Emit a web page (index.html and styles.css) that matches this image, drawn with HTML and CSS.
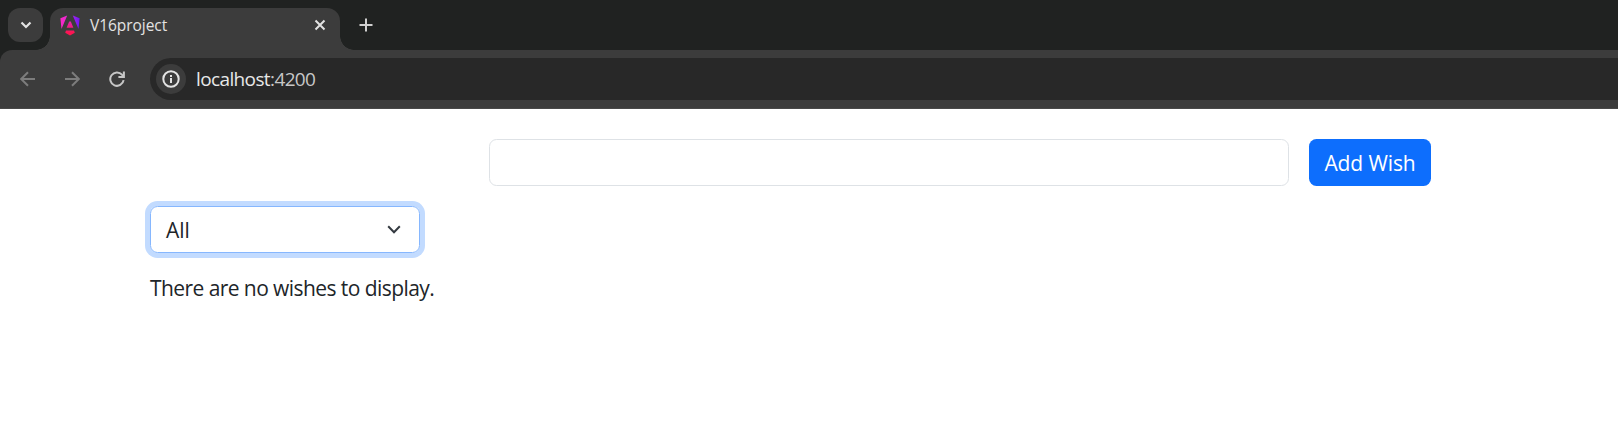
FILE: index.html
```html
<!DOCTYPE html>
<html lang="en">
<head>
<meta charset="utf-8">
<title>V16project</title>
<link rel="stylesheet" href="styles.css">
</head>
<body>
<header class="browser">
  <div class="tabstrip">
    <button class="tab-search" aria-label="Search tabs"><svg width="12" height="8" viewBox="0 0 12 8"><path d="M1.500 1.500 6 6l4.500-4.500"/></svg></button>
    <div class="tab">
      <svg class="favicon" width="20" height="21" viewBox="0 0 20 21">
        <defs>
          <linearGradient id="side" x1="0" y1="0" x2="20" y2="0" gradientUnits="userSpaceOnUse"><stop offset="0" stop-color="#fb28c4"/><stop offset=".45" stop-color="#e528d8"/><stop offset=".7" stop-color="#9a20f0"/><stop offset="1" stop-color="#6b18f5"/></linearGradient>
          <linearGradient id="mid" x1="0" y1="0" x2="0" y2="21" gradientUnits="userSpaceOnUse"><stop offset="0" stop-color="#d62ae0"/><stop offset=".6" stop-color="#f01c80"/><stop offset=".85" stop-color="#ff1450"/></linearGradient>
        </defs>
        <path fill="url(#side)" d="M7.200.5 1.500 14 .4 3.200zM12.800.5 18.500 14l1.100-10.800z"/>
        <path fill="url(#mid)" d="M9.200 6.500h1.600l2.600 6.200H6.600zM6 15.500h8l.8 2.200L10 20.500l-4.800-2.800z"/>
      </svg>
      <span class="tab-title">V16project</span>
      <svg class="tab-close" width="12" height="12" viewBox="0 0 12 12"><path d="m1.500 1.500 9 9m0-9-9 9"/></svg>
    </div>
    <svg class="tab-new" width="14" height="14" viewBox="0 0 14 14"><path d="M7 .5v13M.5 7h13"/></svg>
  </div>
  <div class="toolbar">
    <svg class="nav dim" width="16" height="16" viewBox="0 0 16 16"><path d="M15 8H1.500M8 1.200 1.200 8 8 14.800"/></svg>
    <svg class="nav dim forward" width="16" height="16" viewBox="0 0 16 16"><path d="M1 8h13.500M8 1.200 14.800 8 8 14.800"/></svg>
    <svg class="nav reload" width="16" height="16" viewBox="0 0 16 16"><path d="M14.600 9.200A6.700 6.700 0 1 1 13 3.700L14.800 5.500M14.900.5v5.400H9.400"/></svg>
    <div class="omnibox">
      <span class="site-info"><svg width="18" height="18" viewBox="0 0 18 18"><circle cx="9" cy="9" r="7.700"/><path d="M9 8v5M9 5v2"/></svg></span>
      <span class="url">localhost<span class="port">:4200</span></span>
    </div>
  </div>
</header>
<main class="page">
  <form class="wish-form">
    <input class="wish-input" type="text" aria-label="Wish">
    <button class="add-button" type="button">Add Wish</button>
  </form>
  <div class="filter" role="combobox" aria-label="Filter"><span>All</span><svg width="14" height="9" viewBox="0 0 14 9"><path d="m1.200 1.300 5.800 5.900 5.800-5.900"/></svg></div>
  <p class="empty">There are no wishes to display.</p>
</main>
</body>
</html>
```

FILE: styles.css
```css
* { box-sizing: border-box; }
body {
  margin: 0;
  height: 436px;
  overflow: hidden;
  background: #fff;
  color: #212529;
  font: 21px/30px "Open Sans", "Noto Sans", sans-serif;
}
svg { display: block; flex: none; fill: none; stroke-width: 2; }
.browser { background: #202221; }
.tabstrip { display: flex; height: 50px; padding: 8px 0 0 8px; }
.tab-search {
  display: flex; align-items: center; justify-content: center;
  width: 35px; height: 34px; margin: 0 7px 0 0; padding: 0;
  border: 0; border-radius: 12px; background: #3c3c3c; stroke: #e3e3e3;
}
.tab-search svg { stroke-width: 2.2; }
.tab {
  position: relative;
  display: flex; align-items: center;
  width: 290px; height: 42px; padding: 0 14px 8px 10px;
  border-radius: 13px 13px 0 0; background: #3c3c3c;
}
.tab::before, .tab::after {
  content: ""; position: absolute; bottom: 0; width: 14px; height: 14px;
}
.tab::before { left: -14px; background: radial-gradient(circle at 0 0, transparent 13.500px, #3c3c3c 14px); }
.tab::after { right: -14px; background: radial-gradient(circle at 100% 0, transparent 13.500px, #3c3c3c 14px); }
.favicon { stroke: none; }
.tab-title { margin-left: 10px; font-size: 15.500px; letter-spacing: -.05px; color: #e3e3e3; }
.tab-close { margin-left: auto; stroke: #e3e3e3; }
.tab-new { margin: 10px 0 0 19px; stroke: #d0d0d0; }
.toolbar {
  display: flex; align-items: center;
  height: 59px; padding: 0 0 1px 20px;
  border-bottom: 1px solid #484848; border-radius: 12px 0 0 0;
  background: #3c3c3c;
}
.nav { stroke: #c7c7c7; }
.dim { stroke: #7c7c7c; }
.forward { margin-left: 28px; }
.reload { margin-left: 29px; }
.omnibox {
  display: flex; align-items: center; flex: 1;
  height: 42px; margin-left: 25px; padding-left: 6px;
  border-radius: 21px 0 0 21px; background: #282828;
}
.site-info {
  display: flex; align-items: center; justify-content: center;
  width: 30px; height: 30px; border-radius: 50%;
  background: #3c3c3c; stroke: #e3e3e3;
}
.url { margin-left: 10px; font-size: 19px; letter-spacing: -.62px; color: #e8e8e8; }
.port { color: #c7c7c7; }
.page { padding: 30px 187px 0 150px; }
.wish-form { display: flex; justify-content: flex-end; gap: 20px; }
.wish-input { width: 800px; height: 47px; padding: 0 15px; border: 1px solid #dee2e6; border-radius: 7.500px; font: inherit; }
.add-button {
  width: 122px; height: 47px; padding: 0;
  border: 0; border-radius: 7.500px;
  background: #0d6efd; color: #fff; font: inherit; letter-spacing: -.1px; white-space: nowrap;
}
.filter {
  display: flex; align-items: center; justify-content: space-between;
  width: 270px; height: 47px; margin-top: 20px; padding: 0 18px 0 15px;
  border: 1px solid #86b7fe; border-radius: 7.500px;
  box-shadow: 0 0 0 5px #c2dbff; stroke: #343a40;
}
.empty { margin: 20px 0 0; letter-spacing: -.57px; white-space: nowrap; }
```
